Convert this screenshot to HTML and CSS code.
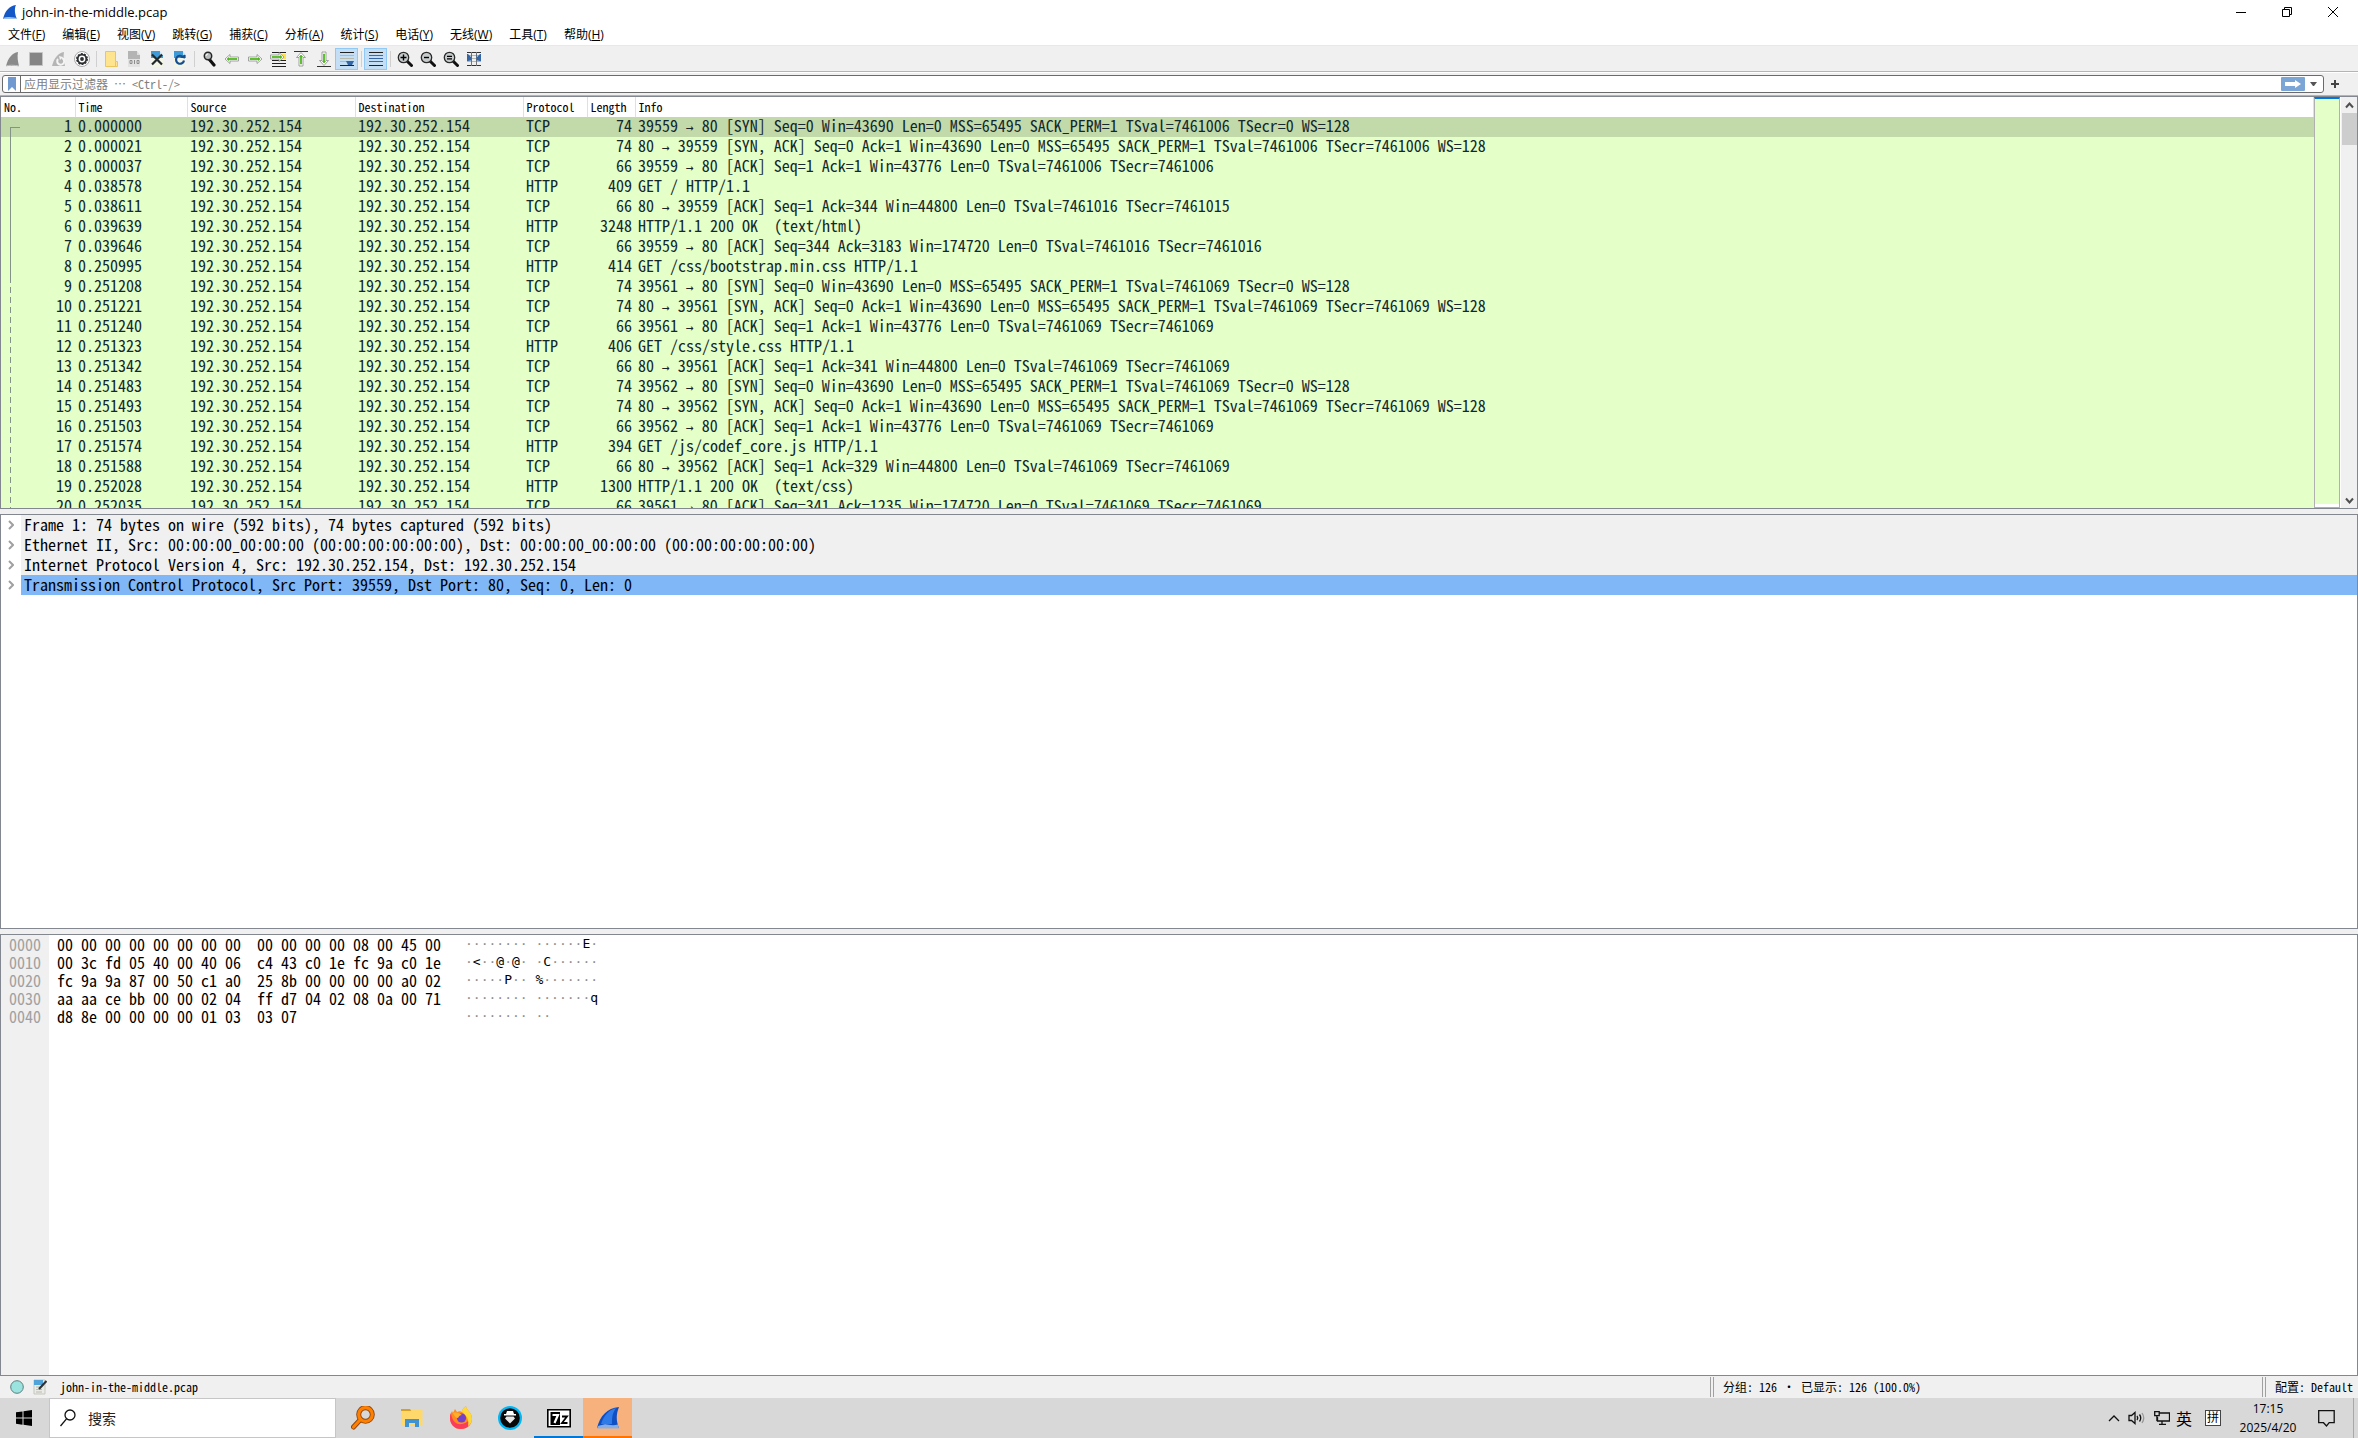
FILE: index.html
```
<!DOCTYPE html>
<html lang="zh-CN">
<head>
    <meta charset="UTF-8">
    <meta name="viewport" content="width=device-width, initial-scale=1.0">
    <title>john-in-the-middle.pcap</title>
    <link rel="stylesheet" href="styles.css">
</head>
<body>
    <header class="titlebar">
        <svg class="app-icon" width="16" height="16" viewBox="0 0 16 16"><path d="M1 15C3 7 7 2 14 1c-2 4-1 10 1 14z" fill="#1458c8"/><path d="M1 15c1-2 3-3 14-1v1z" fill="#9cc0ee"/></svg>
        <h1>john-in-the-middle.pcap</h1>
        <div class="window-buttons">
            <button aria-label="最小化"><svg width="12" height="12" viewBox="0 0 12 12"><path d="M1 6.500h10" stroke="#000"/></svg></button>
            <button aria-label="还原"><svg width="12" height="12" viewBox="0 0 12 12" fill="none" stroke="#000"><path d="M1.500 3.500h7v7h-7zM3.500 3.500v-2h7v7h-2"/></svg></button>
            <button aria-label="关闭"><svg width="12" height="12" viewBox="0 0 12 12"><path d="M1 1l10 10M11 1L1 11" stroke="#000"/></svg></button>
        </div>
    </header>

    <nav class="menubar">
        <button>文件(<u>F</u>)</button>
        <button>编辑(<u>E</u>)</button>
        <button>视图(<u>V</u>)</button>
        <button>跳转(<u>G</u>)</button>
        <button>捕获(<u>C</u>)</button>
        <button>分析(<u>A</u>)</button>
        <button>统计(<u>S</u>)</button>
        <button>电话(<u>Y</u>)</button>
        <button>无线(<u>W</u>)</button>
        <button>工具(<u>T</u>)</button>
        <button>帮助(<u>H</u>)</button>
    </nav>

    <div class="toolbar">
        <button aria-label="开始捕获"><svg viewBox="0 0 16 16"><path d="M1 15C3 7 7 2 13 1c-1 5 0 10 1 14z" fill="#8a8a8a"/><path d="M1 15c3-1 8-1 13 0" stroke="#c8c8c8" fill="none"/></svg></button>
        <button aria-label="停止捕获"><svg viewBox="0 0 16 16"><path d="M1.500 1.500h13v13h-13z" fill="#858585" stroke="#c4c4c4"/></svg></button>
        <button aria-label="重新开始捕获"><svg viewBox="0 0 16 16"><path d="M1 15C3 7 7 2 13 1c-1 5 0 10 1 14z" fill="#b5b5b5"/><path d="M11 7a3.500 3.500 0 1 1-4 1" stroke="#f4f4f4" stroke-width="2" fill="none"/><path d="M8 5l4 1-3 3z" fill="#f4f4f4"/></svg></button>
        <button aria-label="捕获选项"><svg viewBox="0 0 16 16"><circle cx="8" cy="8" r="7.500" fill="#fff" stroke="#a8a8a8"/><circle cx="8" cy="8" r="4.300" fill="none" stroke="#2b2f31" stroke-width="1.800"/><circle cx="8" cy="8" r="5.300" fill="none" stroke="#2b2f31" stroke-width="1.300" stroke-dasharray="2 1.300"/><circle cx="8" cy="8" r="1.900" fill="#2b2f31"/></svg></button>
        <span class="sep"></span>
        <button aria-label="打开"><svg viewBox="0 0 16 16"><path d="M2.500.5h10v10h2v5h-12z" fill="#ffe48f" stroke="#ecc65c"/><path d="M12.500 10.500v5" stroke="#ecc65c"/></svg></button>
        <button aria-label="保存"><svg viewBox="0 0 16 16"><path d="M2 0h9l3 4v12H2z" fill="#e2e2e2"/><path d="M2 0h9v4h3v4H2z" fill="#b4b4b4"/><path d="M11 0l3 4h-3z" fill="#dedede"/><path d="M4 9.500h2v3H4zM8.500 9v4M11 9.500h2v3h-2z" stroke="#8c8c8c" fill="none"/></svg></button>
        <button aria-label="关闭文件"><svg viewBox="0 0 16 16"><path d="M2 0h9l3 4v12H2z" fill="#f3f5e6"/><path d="M2 0h9v4h3v3H2z" fill="#3e9bd8"/><path d="M11 0l3 4h-3z" fill="#cfe4f3"/><path d="M3 3.500l10 10M13 3.500l-10 10" stroke="#22292c" stroke-width="2.200"/></svg></button>
        <button aria-label="重新加载"><svg viewBox="0 0 16 16"><path d="M2 0h9l3 4v12H2z" fill="#f3f5e6"/><path d="M2 0h9v4h3v3H2z" fill="#3e9bd8"/><path d="M11 0l3 4h-3z" fill="#cfe4f3"/><path d="M11 6a4 4 0 1 0 1 3.500" stroke="#154f91" stroke-width="2.200" fill="none"/><path d="M8 6.500l5-3v4z" fill="#154f91"/></svg></button>
        <span class="sep"></span>
        <button aria-label="查找分组"><svg viewBox="0 0 16 16"><path d="M8 8l5 6" stroke="#111" stroke-width="3.200" stroke-linecap="round"/><circle cx="7" cy="5" r="3.700" fill="#b9bdbd" stroke="#262626" stroke-width="1.500"/><path d="M5 5a2 2 0 0 1 2-2" stroke="#fff" fill="none"/></svg></button>
        <button aria-label="后退"><svg viewBox="0 0 16 16"><path class="arrow" d="M1 8l5-4.500v2.500h8.500v4H6v2.500z"/><path class="arrow-in" d="M3 8l2-1.500v1h8v1H5v1z"/></svg></button>
        <button aria-label="前进"><svg viewBox="0 0 16 16"><path class="arrow" d="M15 8l-5-4.500v2.500H1.500v4H10v2.500z"/><path class="arrow-in" d="M13 8l-2-1.500v1H3v1h8v1z"/></svg></button>
        <button aria-label="转到分组"><svg viewBox="0 0 16 16"><path d="M2 1.500h14M2 9.500h14M2 12.500h14M2 15.500h14" stroke="#222"/><path d="M11 3h5v5h-5z" fill="#fce04c"/><path class="arrow" d="M14 6L9 1.500v2.500H.5v4H9v2.500z"/><path class="arrow-in" d="M12 6l-2-1.500v1H2v1h8v1z"/></svg></button>
        <button aria-label="首个分组"><svg viewBox="0 0 16 16"><path d="M1 .5h14" stroke="#333"/><path class="arrow" d="M8 1.500l4.500 5h-2.500v8.500H6V6.500H3.500z"/><path class="arrow-in" d="M8 4l1.500 2H8.500V13H7.500V6H6.500z"/></svg></button>
        <button aria-label="最新分组"><svg viewBox="0 0 16 16"><path d="M1 15.500h14" stroke="#333"/><path class="arrow" d="M8 14.500l4.500-5h-2.500V1H6v8.500H3.500z"/><path class="arrow-in" d="M8 12l1.500-2H8.500V3H7.500v7H6.500z"/></svg></button>
        <button class="on" aria-label="自动滚动"><svg viewBox="0 0 16 16"><path d="M1 1.500h14M1 14.500h14" stroke="#222"/><path d="M1 4.500h14M1 7.500h14M1 10.500h14" stroke="#b9b9a9"/><path d="M7 10h8l-2 4H9z" fill="#3465a4"/></svg></button>
        <span class="sep"></span>
        <button class="on" aria-label="着色分组"><svg viewBox="0 0 16 16"><path d="M1 1.500h14M1 14.500h14" stroke="#222"/><path d="M1 4.500h14" stroke="#f02828"/><path d="M1 7.500h14" stroke="#3465a4"/><path d="M1 10.500h14" stroke="#75507b"/></svg></button>
        <span class="sep"></span>
        <button aria-label="放大"><svg viewBox="0 0 16 16"><path d="M10 10l4.500 4.500" stroke="#111" stroke-width="3" stroke-linecap="round"/><circle cx="6.500" cy="6.500" r="5.200" fill="#c6cbcb" stroke="#2a2a2a" stroke-width="1.300"/><path d="M3.500 6.500h6M6.500 3.500v6" stroke="#000" stroke-width="1.400"/></svg></button>
        <button aria-label="缩小"><svg viewBox="0 0 16 16"><path d="M10 10l4.500 4.500" stroke="#111" stroke-width="3" stroke-linecap="round"/><circle cx="6.500" cy="6.500" r="5.200" fill="#c6cbcb" stroke="#2a2a2a" stroke-width="1.300"/><path d="M4 6.500h5" stroke="#000" stroke-width="1.400"/></svg></button>
        <button aria-label="普通大小"><svg viewBox="0 0 16 16"><path d="M10 10l4.500 4.500" stroke="#111" stroke-width="3" stroke-linecap="round"/><circle cx="6.500" cy="6.500" r="5.200" fill="#c6cbcb" stroke="#2a2a2a" stroke-width="1.300"/><path d="M4 5.300h5M4 7.800h5" stroke="#000" stroke-width="1.300"/></svg></button>
        <button aria-label="调整列宽"><svg viewBox="0 0 16 16"><path d="M1 1.500h14M1 14.500h14" stroke="#333"/><path d="M1 4.500h14M1 7.500h14M1 10.500h14" stroke="#b4b8ac"/><path d="M5.500 1v14M10.500 1v14" stroke="#777"/><path d="M1 3h1l3 3V3.500h.5v6H5L2 10H1zM15 3h-1l-3 3V3.500h-.5v6h.5l3 .5h1z" fill="#3465a4"/></svg></button>
    </div>

    <form class="filterbar">
        <div class="filter-box">
            <button type="button" class="bookmark" aria-label="书签"><svg width="10" height="14" viewBox="0 0 10 14"><path d="M1 0h8v14l-4-4-4 4z" fill="#7099d0"/></svg></button>
            <input class="ui-text" type="text" aria-label="显示过滤器" placeholder="应用显示过滤器 ⋯ &lt;Ctrl-/&gt;">
            <button type="button" class="apply" aria-label="应用"><svg width="24" height="14" viewBox="0 0 24 14"><rect width="24" height="14" rx="1" fill="#7ba5d4"/><path d="M4 5h10V3l6 4-6 4V9H4z" fill="#fff"/></svg></button>
            <button type="button" class="drop" aria-label="历史"><svg width="8" height="4" viewBox="0 0 8 4"><path d="M0 0h7L4 4H3z" fill="#555"/></svg></button>
        </div>
        <button type="button" class="add" aria-label="添加过滤器"><svg width="8" height="8" viewBox="0 0 8 8"><path d="M4 0v8M0 4h8" stroke="#444" stroke-width="2"/></svg></button>
    </form>

    <main class="panes">
        <section class="pane packets">
            <div class="packet-scroll">
                <table>
                    <colgroup><col class="c-no"><col class="c-time"><col class="c-addr"><col class="c-addr"><col class="c-proto"><col class="c-len"><col></colgroup>
                    <thead class="ui-text">
                        <tr><th>No.</th><th>Time</th><th>Source</th><th>Destination</th><th>Protocol</th><th>Length</th><th>Info</th></tr>
                    </thead>
                    <tbody class="mono">
                        <tr class="selected first"><td>1</td><td>0.000000</td><td>192.30.252.154</td><td>192.30.252.154</td><td>TCP</td><td>74</td><td>39559 <i>→</i> 80 [SYN] Seq=0 Win=43690 Len=0 MSS=65495 SACK_PERM=1 TSval=7461006 TSecr=0 WS=128</td></tr>
                        <tr class="same"><td>2</td><td>0.000021</td><td>192.30.252.154</td><td>192.30.252.154</td><td>TCP</td><td>74</td><td>80 <i>→</i> 39559 [SYN, ACK] Seq=0 Ack=1 Win=43690 Len=0 MSS=65495 SACK_PERM=1 TSval=7461006 TSecr=7461006 WS=128</td></tr>
                        <tr class="same"><td>3</td><td>0.000037</td><td>192.30.252.154</td><td>192.30.252.154</td><td>TCP</td><td>66</td><td>39559 <i>→</i> 80 [ACK] Seq=1 Ack=1 Win=43776 Len=0 TSval=7461006 TSecr=7461006</td></tr>
                        <tr class="same"><td>4</td><td>0.038578</td><td>192.30.252.154</td><td>192.30.252.154</td><td>HTTP</td><td>409</td><td>GET / HTTP/1.1 </td></tr>
                        <tr class="same"><td>5</td><td>0.038611</td><td>192.30.252.154</td><td>192.30.252.154</td><td>TCP</td><td>66</td><td>80 <i>→</i> 39559 [ACK] Seq=1 Ack=344 Win=44800 Len=0 TSval=7461016 TSecr=7461015</td></tr>
                        <tr class="same"><td>6</td><td>0.039639</td><td>192.30.252.154</td><td>192.30.252.154</td><td>HTTP</td><td>3248</td><td>HTTP/1.1 200 OK  (text/html)</td></tr>
                        <tr class="same"><td>7</td><td>0.039646</td><td>192.30.252.154</td><td>192.30.252.154</td><td>TCP</td><td>66</td><td>39559 <i>→</i> 80 [ACK] Seq=344 Ack=3183 Win=174720 Len=0 TSval=7461016 TSecr=7461016</td></tr>
                        <tr class="same"><td>8</td><td>0.250995</td><td>192.30.252.154</td><td>192.30.252.154</td><td>HTTP</td><td>414</td><td>GET /css/bootstrap.min.css HTTP/1.1 </td></tr>
                        <tr class="other"><td>9</td><td>0.251208</td><td>192.30.252.154</td><td>192.30.252.154</td><td>TCP</td><td>74</td><td>39561 <i>→</i> 80 [SYN] Seq=0 Win=43690 Len=0 MSS=65495 SACK_PERM=1 TSval=7461069 TSecr=0 WS=128</td></tr>
                        <tr class="other"><td>10</td><td>0.251221</td><td>192.30.252.154</td><td>192.30.252.154</td><td>TCP</td><td>74</td><td>80 <i>→</i> 39561 [SYN, ACK] Seq=0 Ack=1 Win=43690 Len=0 MSS=65495 SACK_PERM=1 TSval=7461069 TSecr=7461069 WS=128</td></tr>
                        <tr class="other"><td>11</td><td>0.251240</td><td>192.30.252.154</td><td>192.30.252.154</td><td>TCP</td><td>66</td><td>39561 <i>→</i> 80 [ACK] Seq=1 Ack=1 Win=43776 Len=0 TSval=7461069 TSecr=7461069</td></tr>
                        <tr class="other"><td>12</td><td>0.251323</td><td>192.30.252.154</td><td>192.30.252.154</td><td>HTTP</td><td>406</td><td>GET /css/style.css HTTP/1.1 </td></tr>
                        <tr class="other"><td>13</td><td>0.251342</td><td>192.30.252.154</td><td>192.30.252.154</td><td>TCP</td><td>66</td><td>80 <i>→</i> 39561 [ACK] Seq=1 Ack=341 Win=44800 Len=0 TSval=7461069 TSecr=7461069</td></tr>
                        <tr class="other"><td>14</td><td>0.251483</td><td>192.30.252.154</td><td>192.30.252.154</td><td>TCP</td><td>74</td><td>39562 <i>→</i> 80 [SYN] Seq=0 Win=43690 Len=0 MSS=65495 SACK_PERM=1 TSval=7461069 TSecr=0 WS=128</td></tr>
                        <tr class="other"><td>15</td><td>0.251493</td><td>192.30.252.154</td><td>192.30.252.154</td><td>TCP</td><td>74</td><td>80 <i>→</i> 39562 [SYN, ACK] Seq=0 Ack=1 Win=43690 Len=0 MSS=65495 SACK_PERM=1 TSval=7461069 TSecr=7461069 WS=128</td></tr>
                        <tr class="other"><td>16</td><td>0.251503</td><td>192.30.252.154</td><td>192.30.252.154</td><td>TCP</td><td>66</td><td>39562 <i>→</i> 80 [ACK] Seq=1 Ack=1 Win=43776 Len=0 TSval=7461069 TSecr=7461069</td></tr>
                        <tr class="other"><td>17</td><td>0.251574</td><td>192.30.252.154</td><td>192.30.252.154</td><td>HTTP</td><td>394</td><td>GET /js/codef_core.js HTTP/1.1 </td></tr>
                        <tr class="other"><td>18</td><td>0.251588</td><td>192.30.252.154</td><td>192.30.252.154</td><td>TCP</td><td>66</td><td>80 <i>→</i> 39562 [ACK] Seq=1 Ack=329 Win=44800 Len=0 TSval=7461069 TSecr=7461069</td></tr>
                        <tr class="other"><td>19</td><td>0.252028</td><td>192.30.252.154</td><td>192.30.252.154</td><td>HTTP</td><td>1300</td><td>HTTP/1.1 200 OK  (text/css)</td></tr>
                        <tr class="other"><td>20</td><td>0.252035</td><td>192.30.252.154</td><td>192.30.252.154</td><td>TCP</td><td>66</td><td>39561 <i>→</i> 80 [ACK] Seq=341 Ack=1235 Win=174720 Len=0 TSval=7461069 TSecr=7461069</td></tr>
                    </tbody>
                </table>
            </div>
            <div class="minimap"></div>
            <div class="scrollbar">
                <svg width="9" height="16" viewBox="0 0 9 16"><path d="M1 10.500l3.500-4L8 10.500" fill="none" stroke="#505050" stroke-width="2"/></svg>
                <span class="thumb"></span>
                <svg width="9" height="16" viewBox="0 0 9 16"><path d="M1 6.500l3.500 4L8 6.500" fill="none" stroke="#505050" stroke-width="2"/></svg>
            </div>
        </section>

        <section class="pane details">
            <ul class="mono">
                <li><svg viewBox="0 0 6 10"><path d="M1 1l4 4-4 4"/></svg><span>Frame 1: 74 bytes on wire (592 bits), 74 bytes captured (592 bits)</span></li>
                <li><svg viewBox="0 0 6 10"><path d="M1 1l4 4-4 4"/></svg><span>Ethernet II, Src: 00:00:00_00:00:00 (00:00:00:00:00:00), Dst: 00:00:00_00:00:00 (00:00:00:00:00:00)</span></li>
                <li><svg viewBox="0 0 6 10"><path d="M1 1l4 4-4 4"/></svg><span>Internet Protocol Version 4, Src: 192.30.252.154, Dst: 192.30.252.154</span></li>
                <li class="selected"><svg viewBox="0 0 6 10"><path d="M1 1l4 4-4 4"/></svg><span>Transmission Control Protocol, Src Port: 39559, Dst Port: 80, Seq: 0, Len: 0</span></li>
            </ul>
        </section>

        <section class="pane bytes mono">
<pre class="offsets">0000
0010
0020
0030
0040</pre>
<pre class="hex">00 00 00 00 00 00 00 00  00 00 00 00 08 00 45 00
00 3c fd 05 40 00 40 06  c4 43 c0 1e fc 9a c0 1e
fc 9a 9a 87 00 50 c1 a0  25 8b 00 00 00 00 a0 02
aa aa ce bb 00 00 02 04  ff d7 04 02 08 0a 00 71
d8 8e 00 00 00 00 01 03  03 07</pre>
<pre class="ascii">········ ······<b>E</b>·
·<b>&lt;</b>··<b>@</b>·<b>@</b>· ·<b>C</b>······
·····<b>P</b>·· <b>%</b>·······
········ ·······<b>q</b>
········ ··</pre>
        </section>
    </main>

    <footer class="statusbar ui-text">
        <svg width="14" height="14" viewBox="0 0 14 14"><circle cx="7" cy="7" r="6.300" fill="#9be3df" stroke="#5d7f7e"/></svg>
        <svg class="note" width="14" height="16" viewBox="0 0 14 16"><path d="M1 1h11v14H1z" fill="#e9ebe4" stroke="#c3c7bd"/><path d="M1 1h9v5H1z" fill="#4fa3d8"/><path d="M3 8h5M3 10.500h6M3 13h6" stroke="#b9bcb3"/><path d="M13.500 2L6 10" stroke="#2c3236" stroke-width="2.200"/></svg>
        <span class="file">john-in-the-middle.pcap</span>
        <span class="count">分组: 126 · 已显示: 126 (100.0%)</span>
        <span class="profile">配置: Default</span>
    </footer>

    <div class="taskbar">
        <button class="start" aria-label="开始"><svg width="16" height="16" viewBox="0 0 16 16"><path d="M0 2.300L6.500 1.400v6.200H0zM7.500 1.200L16 0v7.600H7.500zM0 8.500h6.500v6.200L0 13.800zM7.500 8.500H16V16l-8.500-1.200z"/></svg></button>
        <label class="search">
            <svg width="16" height="18" viewBox="0 0 16 18" fill="none" stroke="#111" stroke-width="1.300"><circle cx="10" cy="6" r="5"/><path d="M6.500 9.800L.5 17"/></svg>
            <input type="text" placeholder="搜索" aria-label="搜索">
        </label>
        <div class="apps">
            <button aria-label="Everything"><svg viewBox="0 0 24 24"><path d="M9 14l-6.500 7" stroke="#8c4510" stroke-width="5" stroke-linecap="round"/><circle cx="14.500" cy="8.500" r="6.800" fill="#d8d8d8" stroke="#8c4510" stroke-width="5"/><circle cx="14.500" cy="8.500" r="6.800" fill="none" stroke="#ff8000" stroke-width="3.200"/><path d="M9.500 13.500l-7 7.500" stroke="#ff8000" stroke-width="3.200" stroke-linecap="round"/></svg></button>
            <button aria-label="文件资源管理器"><svg viewBox="0 0 24 24"><path d="M1 3h9l2 3H1z" fill="#d9a021"/><path d="M1 5h10l1-1h10.500v16H1z" fill="#ffd86b"/><path d="M5 21v-8h14v8h-4v-4H9v4z" fill="#3f93d2"/></svg></button>
            <button aria-label="Firefox"><svg viewBox="0 0 24 24"><path d="M12 23C5 23 1 18 1 12c0-3 1-5 2-7l1 2 2-4 2 3c2-1 4-1 5 0 0-2 1-4 4-6 0 4 6 6 6 13 0 6-5 10-11 10z" fill="#ff8a1e"/><path d="M12 23C5 23 1 18 1 12c0-2 0-3 1-5 1 8 5 12 11 11 5-1 8-4 9-8 2 7-3 13-10 13z" fill="#fb3d5c"/><path d="M17 0c0 4 6 6 6 13 0 3-2 6-4 7 1-5 0-9-6-14 0-2 1-4 4-6z" fill="#ffd83a"/><circle cx="12.500" cy="12" r="4.600" fill="#7541c9"/><path d="M4 7c4-1 6 0 9 2-2 0-3 1-4 3-2 0-4-2-5-5z" fill="#ffb02a"/></svg></button>
            <button aria-label="Agent"><svg viewBox="0 0 24 24"><circle cx="12" cy="12" r="12" fill="#00b8f5"/><circle cx="12" cy="12" r="9.800" fill="#090909"/><path d="M9 5h6l1 3h2v1.500H6V8h2z" fill="#fff"/><path d="M8.500 10.500h7l1.500 2-5 5-5-5z" fill="#e8e8e8"/></svg></button>
            <button class="running" aria-label="7-Zip"><svg viewBox="0 0 24 24"><path d="M.8 3.800h22.400v17H.8z" fill="#fff" stroke="#000" stroke-width="1.600"/><path d="M3.500 6h9.500v13H3.500z"/><path d="M5.500 9h5.500l-3.500 8" fill="none" stroke="#fff" stroke-width="2.200"/><path d="M15 10.500h5l-5 6.500h5.500" fill="none" stroke="#000" stroke-width="1.800"/></svg></button>
            <button class="active" aria-label="Wireshark"><svg viewBox="0 0 24 24"><path d="M1 22C4 10 11 2 23 1c-3 7-3 14 0 21z" fill="#0f4fc4"/><path d="M5 18C8 9 13 4 20 2c-4 6-4 10-4 16z" fill="#2d7ae8"/><path d="M1 22.500c1-4 4-3 7-4s7 2 14 0l1 4z" fill="#86aee6"/></svg></button>
        </div>
        <div class="tray">
            <svg width="12" height="7" viewBox="0 0 12 7"><path d="M1 6l5-5 5 5"/></svg>
            <svg width="18" height="14" viewBox="0 0 18 14"><path d="M1 4.500h2.500L7 1.500v11L3.500 9.500H1z"/><path d="M9 5q1.500 2 0 4M11.500 3.500q2.500 3.500 0 7"/><path d="M14 2q3.500 5 0 10" stroke="#999"/></svg>
            <svg width="16" height="14" viewBox="0 0 16 14"><path d="M5 2h10.500v8H3.500V6M8 10v3M5 13.300h7M.7.700h4.500v4H.7zM2.900 4.700V10"/></svg>
            <span class="lang">英</span>
            <span class="ime">拼</span>
            <div class="clock"><time>17:15</time><time>2025/4/20</time></div>
            <button class="notice" aria-label="通知"><svg width="17" height="17" viewBox="0 0 17 17"><path d="M.7.700h15.500v12h-5L8.500 16l-3-3.300H.7z"/></svg></button>
        </div>
    </div>
</body>
</html>
```
FILE: styles.css
```
* { box-sizing: border-box; }
html, body { height: 100%; }
body {
    margin: 0;
    display: flex;
    flex-direction: column;
    overflow: hidden;
    background: #f0f0f0;
    color: #000;
    font: 12px "Open Sans", "Noto Sans CJK SC", sans-serif;
}
button { display: flex; align-items: center; justify-content: center; padding: 0; border: 0; background: none; font: inherit; color: inherit; }
input { min-width: 0; padding: 0; border: 0; outline: 0; background: none; }
h1, ul, pre { margin: 0; padding: 0; font: inherit; }
svg { display: block; flex: none; }

/* half-width latin forms keep both text grids aligned with the CJK glyphs */
.mono { font: 16px/18px "Noto Sans CJK SC", monospace; font-feature-settings: "hwid"; font-variant-ligatures: none; }
.ui-text { font: 12px/20px "Noto Sans CJK SC", monospace; font-feature-settings: "hwid"; }

.titlebar { display: flex; align-items: center; height: 23px; padding: 0 2px; background: #fff; }
.titlebar h1 { flex: 1; margin-left: 4px; font-size: 13px; line-height: 22px; }
.window-buttons { display: flex; }
.window-buttons button { width: 46px; height: 20px; }

.menubar { display: flex; gap: 1px; height: 22px; background: #fff; }
.menubar button { padding: 2px 8px 0; line-height: 20px; white-space: nowrap; }

.toolbar { display: flex; align-items: center; height: 27px; padding: 1px 1px 0; border-top: 1px solid #e8e8e8; border-bottom: 1px solid #b4b4b4; }
.toolbar button { width: 23px; height: 22px; }
.toolbar button svg { width: 16px; height: 16px; }
.toolbar .on { background: #c3def5; border: 1px solid #90c8f6; }
.sep { width: 1px; height: 16px; margin: 0 2px 0 3px; background: #d0d0d0; }
.arrow { fill: #fff; stroke: #8d8d8d; stroke-width: 0.8; }
.arrow-in { fill: #4fb71c; stroke: #4fb71c; stroke-width: 0.8; }

.filterbar { display: flex; align-items: center; height: 24px; padding-left: 2px; border-top: 1px solid #fff; border-bottom: 1px solid #b4b4b4; }
.filter-box { flex: 1; display: flex; align-items: center; height: 18px; border: 1px solid #6b6b6b; border-radius: 3px; background: #fff; }
.bookmark { width: 18px; height: 16px; border-right: 1px solid #6b6b6b; }
.filter-box input { flex: 1; height: 16px; padding-left: 3px; }
.filter-box input::placeholder { color: #808080; opacity: 1; }
.drop { width: 18px; height: 16px; }
.add { width: 34px; padding-right: 12px; }

.panes { flex: 1; min-height: 0; display: flex; flex-direction: column; gap: 5px; }
.pane { flex: 412 1 0; min-height: 0; overflow: hidden; border: 1px solid #828790; background: #fff; }

.packets { display: flex; }
.packet-scroll { flex: 1; min-width: 0; overflow: hidden; background: #e4ffc7; }
.packets table { width: 100%; table-layout: fixed; border-collapse: collapse; }
.c-no { width: 74px; }
.c-time { width: 112px; }
.c-addr { width: 168px; }
.c-proto { width: 64px; }
.c-len { width: 48px; }
.packets th { height: 20px; padding: 0 0 0 3px; border-right: 1px solid #e0e0e0; background: #fff; font-weight: normal; line-height: 18px; text-align: left; }
.packets td { height: 20px; padding: 0 3px; line-height: 16px; vertical-align: top; white-space: pre; color: #12272e; }
.packets td:nth-child(1), .packets td:nth-child(6) { text-align: right; }
.packets .selected td { background: #c2d9a9; }
.packets i { font: 13px/8px "DejaVu Sans Mono", monospace; }

/* conversation marker in the first column */
.packets td:first-child { position: relative; }
.packets td:first-child::before { content: ""; position: absolute; left: 9px; top: 0; width: 9px; height: 20px; }
.first td:first-child::before { margin-top: 10px; border-top: 1px solid #839387; border-left: 1px solid #839387; clip-path: inset(0 0 10px 0); }
.same td:first-child::before { border-left: 1px solid #839387; }
.other td:first-child::before { background: repeating-linear-gradient(#839387 0 6px, transparent 6px 10px) 0 0 / 1px 100% no-repeat; }

.minimap { width: 26px; border: 1px solid #b0b0b0; border-top: 2px solid #0078d7; background: linear-gradient(#e4ffc7, #e4ffc7) 0 0 / 100% calc(100% - 3px) no-repeat #fff; }
.scrollbar { display: flex; flex-direction: column; align-items: center; width: 17px; border-left: 1px solid #fff; background: #f0f0f0; }
.thumb { width: 15px; height: 32px; margin-bottom: auto; background: #cdcdcd; }

.details { flex-grow: 415; }
.details ul { list-style: none; }
.details li { display: flex; align-items: center; }
.details svg { width: 6px; height: 10px; margin: 0 7px; fill: none; stroke: #a0a0a0; stroke-width: 2; }
.details span { flex: 1; padding: 0 0 2px 3px; background: #f0f0f0; white-space: pre; }
.details .selected span { background: #80b7f7; }

.bytes { display: flex; flex-grow: 441; }
.bytes .offsets { width: 48px; padding-left: 8px; background: #f0f0f0; color: #a0a0a0; }
.hex { padding-left: 8px; }
.ascii { padding-left: 24px; font: 13px/18px "DejaVu Sans Mono", monospace; color: #909090; }
.ascii b { font-weight: normal; color: #000; }

.statusbar { display: flex; align-items: center; height: 22px; padding-left: 10px; }
.note { margin-left: 9px; }
.file { flex: 1; margin-left: 13px; }
.count, .profile { padding-left: 9px; border-left: 4px double #a0a0a0; }
.count { width: 552px; }
.profile { width: 96px; white-space: nowrap; }

.taskbar { display: flex; align-items: stretch; height: 40px; background: #d8d8d8; }
.start { width: 49px; padding-right: 2px; }
.search { display: flex; align-items: center; width: 287px; padding-left: 10px; border: 1px solid #c6c6c6; background: #fff; }
.search input { flex: 1; margin-left: 12px; font: 14px "Noto Sans CJK SC", sans-serif; }
.search input::placeholder { color: #222; opacity: 1; }
.apps { display: flex; margin-left: 2px; }
.apps button { width: 49px; border: solid transparent; border-width: 2px 0; }
.apps svg { width: 24px; height: 24px; }
.apps .running { border-bottom-color: #0078d7; }
.apps .active { background: #f7b17c; border-color: #f7b17c; border-bottom-color: #ff7300; }
.tray { display: flex; align-items: center; gap: 8px; margin-left: auto; padding-right: 4px; }
.tray svg { fill: none; stroke: #111; stroke-width: 1.3; }
.lang { margin-left: -2px; font-size: 16px; }
.ime { width: 16px; height: 16px; margin-left: 5px; border: 1px solid #444; background: #fff; line-height: 14px; text-align: center; }
.clock { display: grid; width: 76px; margin: 0 1px; line-height: 19px; text-align: center; }
.notice { width: 39px; height: 40px; border-right: 1px solid #a8a8a8; padding-right: 15px; }
```
